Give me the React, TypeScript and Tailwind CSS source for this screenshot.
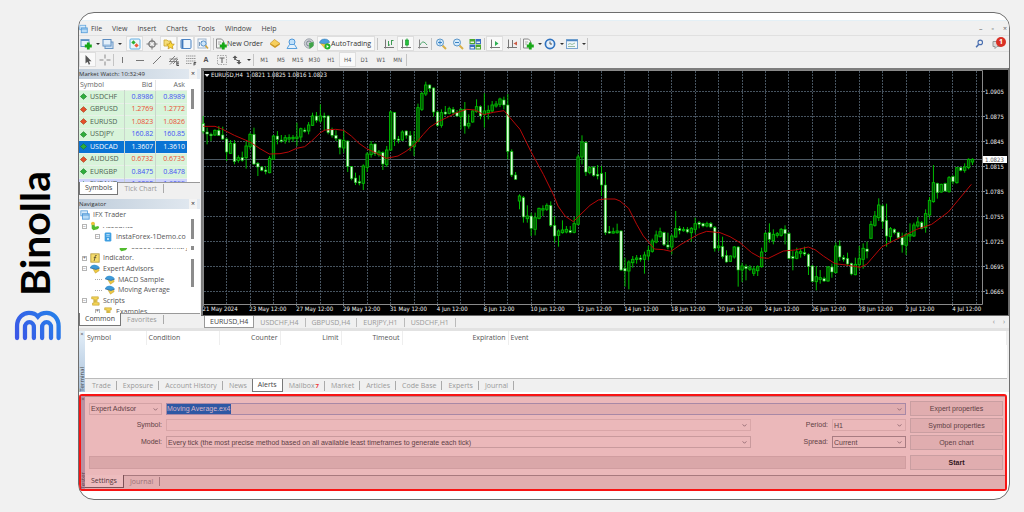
import type { ReactNode } from "react";

// one entry per H4 bar: [open, high, low, close], measured downwards from the top of the plot
const bars = [
    [172, 150, 203, 197], [198, 185, 235, 204], [205, 200, 225, 209], [207, 190, 210, 193],
    [193, 180, 210, 208], [207, 182, 222, 219], [219, 215, 285, 258], [262, 222, 264, 232],
    [232, 222, 295, 287], [283, 268, 290, 275], [275, 257, 287, 283], [275, 226, 308, 240],
    [242, 200, 250, 205], [205, 185, 297, 294], [292, 288, 330, 303], [303, 300, 316, 313],
    [312, 300, 325, 317], [320, 270, 322, 277], [280, 207, 282, 210], [210, 195, 235, 220],
    [222, 207, 230, 226], [224, 207, 233, 215], [218, 205, 230, 215], [218, 207, 228, 214],
    [217, 170, 240, 213], [213, 185, 228, 188], [192, 185, 200, 196], [195, 168, 205, 177],
    [178, 140, 180, 150], [150, 138, 170, 163], [165, 115, 170, 150], [150, 140, 192, 154],
    [150, 148, 205, 200], [190, 185, 215, 208], [208, 193, 225, 217], [220, 218, 265, 245],
    [246, 192, 260, 223], [225, 223, 318, 301], [302, 300, 343, 338], [336, 320, 357, 350],
    [347, 328, 358, 351], [352, 295, 372, 300], [304, 258, 318, 264], [266, 225, 275, 235],
    [234, 232, 270, 263], [266, 252, 272, 258], [260, 256, 312, 294], [296, 240, 303, 252],
    [252, 134, 255, 138], [140, 138, 240, 220], [219, 210, 232, 223], [222, 193, 225, 198],
    [195, 193, 218, 208], [208, 195, 255, 240], [242, 195, 270, 227], [226, 113, 228, 125],
    [130, 78, 135, 82], [84, 47, 90, 57], [57, 55, 78, 67], [66, 64, 152, 138],
    [138, 135, 182, 178], [178, 130, 185, 140], [138, 120, 148, 144], [142, 122, 145, 128],
    [130, 123, 148, 140], [140, 132, 152, 150], [152, 127, 190, 130], [130, 108, 203, 180],
    [180, 145, 188, 172], [168, 133, 170, 135], [137, 100, 140, 122], [122, 118, 160, 150],
    [145, 82, 185, 135], [140, 118, 160, 133], [135, 105, 140, 117], [120, 105, 125, 114],
    [115, 95, 123, 99], [102, 92, 130, 117], [117, 84, 280, 256], [257, 250, 333, 327],
    [327, 318, 342, 340], [405, 385, 430, 390], [395, 390, 470, 453], [458, 418, 470, 450],
    [450, 440, 510, 487], [490, 440, 508, 455], [457, 425, 460, 427], [432, 418, 450, 428],
    [430, 412, 435, 418], [418, 406, 483, 478], [478, 450, 530, 510], [508, 490, 542, 495],
    [500, 463, 503, 492], [498, 480, 502, 490], [494, 480, 502, 499], [499, 453, 502, 473],
    [475, 265, 478, 273], [273, 208, 295, 228], [230, 226, 330, 318], [320, 300, 325, 305],
    [304, 300, 332, 328], [325, 297, 340, 330], [323, 300, 390, 357], [357, 318, 507, 500],
    [497, 480, 503, 501], [501, 485, 503, 497], [500, 473, 503, 495], [495, 493, 615, 612],
    [607, 575, 662, 615], [615, 583, 670, 588], [590, 570, 605, 580], [580, 567, 593, 576],
    [576, 567, 587, 580], [580, 557, 623, 567], [570, 540, 583, 553], [556, 518, 560, 525],
    [528, 494, 532, 507], [512, 485, 515, 497], [500, 497, 540, 536], [537, 500, 550, 543],
    [543, 505, 565, 510], [513, 435, 515, 488], [488, 480, 505, 493], [494, 483, 497, 490],
    [490, 483, 502, 498], [500, 483, 527, 487], [490, 455, 502, 473], [470, 465, 487, 475],
    [473, 470, 484, 480], [480, 467, 484, 473], [473, 468, 487, 483], [485, 480, 557, 547],
    [545, 505, 555, 540], [542, 512, 578, 572], [568, 553, 590, 588], [586, 568, 588, 570],
    [573, 540, 578, 543], [543, 540, 662, 612], [612, 590, 648, 600], [602, 595, 643, 608],
    [610, 597, 615, 605], [622, 600, 630, 609], [614, 598, 630, 602], [602, 545, 605, 558],
    [556, 498, 558, 502], [500, 472, 530, 520], [524, 490, 535, 505], [508, 498, 515, 503],
    [508, 486, 512, 490], [490, 478, 535, 503], [503, 498, 580, 577], [572, 555, 613, 577],
    [577, 545, 580, 558], [562, 548, 575, 557], [560, 542, 570, 564], [565, 562, 627, 602],
    [600, 597, 648, 646], [647, 600, 673, 632], [640, 612, 653, 635], [638, 632, 648, 645],
    [645, 600, 647, 603], [603, 593, 635, 618], [620, 530, 622, 540], [540, 523, 585, 573],
    [575, 567, 587, 580], [577, 560, 600, 594], [592, 590, 628, 624], [626, 575, 628, 595],
    [596, 540, 610, 578], [580, 532, 608, 547], [549, 527, 577, 556], [517, 465, 518, 475],
    [478, 435, 482, 450], [455, 397, 465, 417], [420, 415, 488, 467], [463, 413, 542, 510],
    [512, 483, 530, 488], [490, 487, 505, 500], [500, 497, 518, 515], [515, 500, 560, 537],
    [538, 500, 567, 505], [510, 472, 525, 505], [510, 470, 513, 477], [480, 453, 485, 468],
    [470, 465, 490, 487], [485, 430, 500, 443], [447, 393, 457, 403], [407, 297, 410, 350],
    [352, 350, 398, 380], [378, 353, 380, 355], [353, 350, 378, 375], [377, 330, 380, 335],
    [332, 328, 355, 347], [350, 303, 353, 305], [305, 303, 316, 313], [313, 292, 320, 303],
    [305, 277, 310, 280], [288, 277, 297, 280],
];

const average = [
    [10, 181], [45, 181], [68, 190], [103, 208], [150, 228], [180, 248], [208, 264], [240, 263],
    [265, 258], [290, 247], [314, 242], [335, 225], [361, 200], [375, 192], [407, 190], [431, 193],
    [454, 210], [477, 232], [500, 248], [530, 262], [559, 277], [594, 270], [618, 256], [645, 235],
    [670, 205], [690, 183], [715, 167], [740, 155], [770, 140], [800, 130], [825, 132], [851, 146],
    [880, 139], [912, 134], [930, 155], [960, 190], [992, 255], [1030, 325], [1062, 390], [1074, 420],
    [1095, 450], [1120, 467], [1140, 447], [1170, 418], [1195, 402], [1214, 399], [1245, 399],
    [1260, 405], [1286, 427], [1310, 475], [1330, 510], [1363, 549], [1390, 551], [1413, 556],
    [1440, 537], [1472, 518], [1495, 505], [1520, 496], [1560, 500], [1590, 512], [1620, 530],
    [1655, 560], [1682, 575], [1705, 577], [1750, 555], [1785, 552], [1825, 543], [1845, 551],
    [1870, 570], [1905, 593], [1945, 598], [1980, 604], [2000, 595], [2045, 543], [2085, 522],
    [2115, 508], [2150, 490], [2195, 475], [2245, 438], [2314, 355],
];

const prices = ["1.0905", "1.0875", "1.0845", "1.0815", "1.0785", "1.0755", "1.0725", "1.0695", "1.0665"];

const dates = [
    "21 May 2024", "23 May 12:00", "27 May 12:00", "29 May 12:00", "31 May 12:00", "4 Jun 12:00",
    "6 Jun 12:00", "10 Jun 12:00", "12 Jun 12:00", "14 Jun 12:00", "18 Jun 12:00", "20 Jun 12:00",
    "24 Jun 12:00", "26 Jun 12:00", "28 Jun 12:00", "2 Jul 12:00", "4 Jul 12:00",
];

const barX = (i: number) => 2.2 + i * 3.905;
const plotY = (v: number) => v / 3 - 2;

function Chart() {
    return (
        <svg viewBox="0 0 808 248" className="block w-full h-auto bg-black" fontFamily="'DejaVu Sans Condensed', 'DejaVu Sans', sans-serif" fontSize="6" fill="#f0f0f0">
            <path d="M0 1H808M1 0V248" stroke="#7d7d7d" strokeWidth="2" />
            <path d="M0 247.500H808M807.500 0V248" stroke="#6a6a6a" />
            <g stroke="#46535f" strokeDasharray="2 1">
                {prices.map((p, i) => (
                    <path key={p} d={`M3 ${23.5 + i * 25}H781`} />
                ))}
                {Array.from({ length: 33 }, (_, i) => (
                    <path key={i} d={`M${Math.floor(barX(6 + i * 6)) + 0.5} 3V236`} />
                ))}
            </g>
            <path d="M3 91.500H781" stroke="#4d5a64" />
            <path d="M2.500 236V2.500H781.500V236.500H2.500" stroke="#8a8a8a" fill="none" />
            {bars.map(([open, high, low, close], i) => {
                const falling = close > open;
                const top = plotY(Math.min(open, close));
                const height = Math.max(Math.abs(close - open) / 3, 1.4);
                return (
                    <g key={i} stroke="#00bd00">
                        <path d={`M${barX(i)} ${plotY(high)}V${plotY(low)}`} />
                        <rect x={barX(i) - 1.2} y={top} width="2.400" height={height} fill={falling ? "#dcffdc" : "#005000"} strokeWidth={falling ? 0.6 : 0.9} />
                    </g>
                );
            })}
            <polyline points={average.map(([x, y]) => `${x / 3 - 1},${plotY(y)}`).join(" ")} fill="none" stroke="#b80808" />
            <path d="M3.500 6h5l-2.500 3z" />
            <text x="10" y="9">EURUSD,H4&#160; 1.0821 1.0825 1.0816 1.0823</text>
            {prices.map((p, i) => (
                <g key={p}>
                    <path d={`M782 ${23.5 + i * 25}h2`} stroke="#8a8a8a" />
                    <text x="784" y={26 + i * 25}>{p}</text>
                </g>
            ))}
            <rect x="782" y="88" width="24" height="7" fill="#fff" />
            <text x="784" y="94" fill="#555">1.0823</text>
            {dates.map((d, i) => (
                <g key={d}>
                    <path d={`M${Math.floor(barX(i * 12)) + 0.5} 236v2`} stroke="#8a8a8a" />
                    <text x={1.5 + i * 46.86} y="243">{d}</text>
                </g>
            ))}
        </svg>
    );
}

function Icon({ children }: { children: ReactNode }) {
    return (
        <svg viewBox="0 0 12 12" className="w-3 h-3 shrink-0" fill="none" aria-hidden="true">
            {children}
        </svg>
    );
}

const plus = <path d="M8.300 4.500v7M4.800 8h7" stroke="#17a817" strokeWidth="2.800" />;

const icons: Record<string, ReactNode> = {
    newChart: (
        <Icon>
            <rect x="1" y="1.500" width="8" height="7" fill="#e8f2fb" stroke="#6b9bc7" />
            <path d="M1 2.500h8" stroke="#5b8fc4" />
            {plus}
        </Icon>
    ),
    profiles: (
        <Icon>
            <rect x="3" y="4" width="8" height="6.500" fill="#cfe2f5" stroke="#6a96c4" />
            <rect x="1" y="1.500" width="8" height="6.500" fill="#e3effa" stroke="#5b8bbf" />
            <path d="M1.500 7h7" stroke="#8fb6dc" />
        </Icon>
    ),
    watch: (
        <Icon>
            <rect x="1" y="1" width="10" height="10" rx="1" fill="#eaf5fc" stroke="#62aee0" />
            <path d="M4.500 2.200l2.200 2.200-2.200 2.200-2.200-2.200z" fill="#2eb02e" />
            <path d="M7.500 5.200l2.200 2.200-2.200 2.200-2.200-2.200z" fill="#ee5a35" />
        </Icon>
    ),
    crosshair: (
        <Icon>
            <circle cx="6" cy="6" r="3.200" stroke="#777" strokeWidth="1.200" />
            <path d="M6 .5v4M6 7.500v4M.5 6h4M7.500 6h4" stroke="#777" />
        </Icon>
    ),
    navigator: (
        <Icon>
            <path d="M1 8V2h3l1 1h3v5z" fill="#f6dd77" stroke="#c9a42f" strokeWidth=".8" />
            <path d="M7.500 3.500l1.200 2.400 2.600.4-1.900 1.900.5 2.600-2.400-1.200-2.400 1.200.5-2.600L3.700 6.300l2.600-.4z" fill="#fbd83a" stroke="#b98c1a" strokeWidth=".7" />
        </Icon>
    ),
    terminal: (
        <Icon>
            <rect x="1" y="1.500" width="10" height="9" rx="1" fill="#eef5fc" stroke="#4b83c3" />
            <path d="M2.500 2v8" stroke="#3f78bb" strokeWidth="1.800" />
        </Icon>
    ),
    tester: (
        <Icon>
            <rect x="1" y="1" width="8" height="9" fill="#f3f6fa" stroke="#9db4cc" />
            <path d="M2.500 8V4M4.500 6V3" stroke="#7e9dbd" />
            <circle cx="6.500" cy="5.500" r="2.600" fill="#cfe6fa" stroke="#5590c9" />
            <path d="M8.500 7.500L11 10.500" stroke="#d1a33a" strokeWidth="1.600" />
        </Icon>
    ),
    order: (
        <Icon>
            <path d="M1.500 1h5l2 2v7h-7z" fill="#f4f4f4" stroke="#888" />
            <path d="M3 4h3M3 6h2" stroke="#999" strokeWidth=".8" />
            {plus}
        </Icon>
    ),
    gold: (
        <Icon>
            <path d="M1 6.500L6 3l5 3.500L6 10z" fill="#d19a20" />
            <path d="M1 5.500L5.500 1.500l5.500 4L6 8.500z" fill="#f7cf5c" stroke="#bd8a1e" strokeWidth=".6" />
        </Icon>
    ),
    market: (
        <Icon>
            <circle cx="6" cy="4" r="3" fill="#bfe0fa" stroke="#4f97d8" />
            <path d="M3.500 6.500h5L11 10.500H1z" fill="#e4f1fc" stroke="#5aa0dc" />
        </Icon>
    ),
    signals: (
        <Icon>
            <circle cx="6" cy="5.500" r="4.700" fill="#c9cdd2" stroke="#a3a9b0" />
            <circle cx="6" cy="5.500" r="2.500" stroke="#7f8994" />
            <path d="M6 5l4.500-1v4L6.500 11z" fill="#3fa548" />
        </Icon>
    ),
    auto: (
        <Icon>
            <path d="M1.500 5.500l4.500 5 3-3V4z" fill="#f1ca45" stroke="#c79b21" strokeWidth=".5" />
            <path d="M.5 5c0-2 2-4 5-4s5 1.500 5 3.500L6 6z" fill="#4c9fdd" stroke="#3479b5" strokeWidth=".5" />
            <circle cx="8.500" cy="8.500" r="3" fill="#1fb32b" />
            <path d="M7.600 7l2.300 1.500L7.600 10z" fill="#fff" />
        </Icon>
    ),
    barChart: (
        <Icon>
            <path d="M2.500 1.500v9M1 9.500h10" stroke="#777" />
            <path d="M5.500 3v5M8.500 2v5M8.500 2.500h2M5.500 7h1.500" stroke="#3f9b55" />
        </Icon>
    ),
    candleChart: (
        <Icon>
            <path d="M2.500 1.500v9M1 9.500h10" stroke="#777" />
            <path d="M7 .5v8" stroke="#17a22d" />
            <rect x="5.500" y="2" width="3" height="5" fill="#24c23c" stroke="#159129" strokeWidth=".6" />
        </Icon>
    ),
    lineChart: (
        <Icon>
            <path d="M2.500 1.500v9M1 9.500h10" stroke="#888" />
            <path d="M3 7c2-4 4-4 7 0" stroke="#4ba36a" />
        </Icon>
    ),
    zoomIn: (
        <Icon>
            <path d="M7.500 7.500l3.500 3.500" stroke="#d9b04a" strokeWidth="2" />
            <circle cx="5" cy="4.500" r="3.500" fill="#d5ebfb" stroke="#5a95c8" />
            <path d="M5 2.500v4M3 4.500h4" stroke="#3b82c4" />
        </Icon>
    ),
    zoomOut: (
        <Icon>
            <path d="M7.500 7.500l3.500 3.500" stroke="#d9b04a" strokeWidth="2" />
            <circle cx="5" cy="4.500" r="3.500" fill="#d5ebfb" stroke="#5a95c8" />
            <path d="M3 4.500h4" stroke="#3b82c4" />
        </Icon>
    ),
    tile: (
        <Icon>
            <path d="M.5 1H6v5H.5zM6.500 6.500H12v5H6.500z" fill="#4ba82e" />
            <path d="M6.500 1H12v5H6.500zM.5 6.500H6v5H.5z" fill="#3a6fc4" />
            <path d="M1.500 3.500H5v1.500H1.500zM7.500 3.500H11v1.500H7.500zM1.500 9H5v1.500H1.500zM7.500 9H11v1.500H7.500z" fill="#e9f2ea" />
        </Icon>
    ),
    scroll: (
        <Icon>
            <path d="M2.500 1.500v9M1 9.500h10" stroke="#777" />
            <path d="M6 3l3.500 2.500L6 8z" fill="#2cb052" />
        </Icon>
    ),
    shift: (
        <Icon>
            <path d="M2.500 1.500v9M1 9.500h10M6.500 2v7" stroke="#777" />
            <path d="M11 3.500L7.500 5.500 11 7.500z" fill="#cc5b45" />
        </Icon>
    ),
    clock: (
        <Icon>
            <circle cx="6" cy="6" r="4.600" fill="#e6f1fb" stroke="#2f72bf" strokeWidth="1.700" />
            <path d="M6 3.500V6h2" stroke="#555" />
        </Icon>
    ),
    template: (
        <Icon>
            <rect x=".5" y="1.500" width="11" height="9" fill="#f0f6fb" stroke="#7aa5cf" />
            <path d="M.5 2.500h11" stroke="#4c86c2" strokeWidth="1.500" />
            <path d="M2 6.500l2-1 2 1 3-1.500M2 8.500h7" stroke="#7fae8c" strokeWidth=".8" />
        </Icon>
    ),
    cursor: (
        <Icon>
            <path d="M3.500 1v8.500l2-1.800 1.300 3 1.400-.7-1.300-2.800h2.600z" fill="#555" />
        </Icon>
    ),
    cross: (
        <Icon>
            <path d="M6 .5v4M6 7.500v4M.5 6h4M7.500 6h4" stroke="#888" />
        </Icon>
    ),
    vline: <Icon><path d="M5.500 3v6" stroke="#777" /></Icon>,
    hline: <Icon><path d="M2 6.500h8" stroke="#777" /></Icon>,
    trend: <Icon><path d="M2 10l8-8" stroke="#777" /></Icon>,
    channel: (
        <Icon>
            <path d="M1 8l6-6M2 10.500l7-7M5 10l5-5M1.500 5h8M1 7.500h8" stroke="#777" strokeWidth=".9" />
            <path d="M11 8H8.800v3.500H11M8.800 9.800H11" stroke="#333" strokeWidth=".8" />
        </Icon>
    ),
    fibo: (
        <Icon>
            <path d="M1 2h10M1 4.500h10M1 7h10M1 9.500h6" stroke="#999" strokeDasharray="1.500 .5" />
            <path d="M9 11.500V8.500h2.200M9 10h2" stroke="#333" strokeWidth=".8" />
        </Icon>
    ),
    label: (
        <Icon>
            <rect x="1.500" y="1.500" width="9" height="9" stroke="#aaa" strokeDasharray="1.500 1" />
            <path d="M3.500 4h5M6 4v5" stroke="#666" strokeWidth="1.100" />
        </Icon>
    ),
    arrows: (
        <Icon>
            <path d="M4 1.500l2.500 2.500H1.500zM8 10.500L5.500 8h5zM3.200 4h1.600v2H3.200zM7.200 6h1.600v2H7.200z" fill="#555" />
            <path d="M4.500 5.500l3 1.500" stroke="#555" />
        </Icon>
    ),
    windows: (
        <Icon>
            <rect x="1" y="1" width="8" height="6" fill="#d6eafa" stroke="#5ba1db" />
            <rect x="3" y="4.500" width="8" height="6.500" fill="#b7dbf7" stroke="#4b95d6" />
            <path d="M3 6h8" stroke="#4b95d6" />
        </Icon>
    ),
    person: (
        <Icon>
            <path d="M2 3v6l2 2 5-1 2-2-1-2-4 1-1-5z" fill="#52bb2f" />
            <circle cx="3.500" cy="3" r="2.200" fill="#eec13d" />
        </Icon>
    ),
    server: (
        <Icon>
            <rect x="2" y=".5" width="8" height="11" rx="1.500" fill="#3f9fe2" />
            <path d="M4 3h4M4 5h4" stroke="#c6e6fb" />
            <circle cx="6" cy="8.500" r="1.200" fill="#e6f5ff" />
        </Icon>
    ),
    indicator: (
        <Icon>
            <rect x="1" y="1" width="10" height="10" fill="#f5dc6c" stroke="#b3983a" />
            <path d="M8 3H6.500L5 9.500M4.500 5.500h3" stroke="#5d5130" />
        </Icon>
    ),
    advisor: (
        <Icon>
            <path d="M3 5l3.500 6 4.500-3-1-4z" fill="#ecc843" stroke="#b8932b" strokeWidth=".5" />
            <path d="M0 4.500C1 1.500 3.500.5 6 1c3 .5 5.500 2 5.500 4L7 6.500z" fill="#3f9ad8" />
            <path d="M0 4.500l7 2 4.500-1.500" stroke="#2d6fa6" />
        </Icon>
    ),
    script: (
        <Icon>
            <path d="M2 1h8v2.500H8.500V8H11v3H3V8.500h1.500V3.500H2z" fill="#f3d457" stroke="#c09c2c" strokeWidth=".7" />
            <path d="M5 5h2.500M5 7h2.500" stroke="#a3872d" strokeWidth=".7" />
        </Icon>
    ),
};

function Caret() {
    return <span className="w-0 h-0 border-x-2 border-x-transparent border-t-2 border-t-[#333]" />;
}

function Tool({ name, pressed, menu }: { name: string; pressed?: boolean; menu?: boolean }) {
    return (
        <button
            type="button"
            aria-label={name}
            className={`flex items-center justify-center h-full ${menu ? "w-[22px] gap-1" : "w-[17px]"} ${pressed ? "bg-[#f9f9f9] border border-[#dedede]" : ""}`}
        >
            {icons[name]}
            {menu && <Caret />}
        </button>
    );
}

function Sep() {
    return <span className="w-px h-3 bg-[#c4c4c4]" />;
}

function MenuBar() {
    return (
        <nav className="flex items-center h-[15px] pr-[2px] pt-px border-t border-[#e4f0f6]">
            <span className="w-[12px] [&>svg]:w-[9px]">{icons.windows}</span>
            <div className="flex gap-[10px] text-[#444]">
                {["File", "View", "Insert", "Charts", "Tools", "Window", "Help"].map((m) => (
                    <button key={m} type="button">{m}</button>
                ))}
            </div>
            <div className="ml-auto flex gap-[9px] text-[#666]">
                <button type="button" aria-label="Minimize">–</button>
                <button type="button" aria-label="Restore">▫</button>
                <button type="button" aria-label="Close">×</button>
            </div>
        </nav>
    );
}

function Toolbars() {
    return (
        <>
            <div className="flex items-center h-4 border-t border-[#e0e0e0] text-[#333]">
                <Tool name="newChart" menu />
                <Tool name="profiles" menu />
                <span className="ml-[2px] mr-px"><Sep /></span>
                <Tool name="watch" pressed />
                <Tool name="crosshair" />
                <Tool name="navigator" pressed />
                <Tool name="terminal" pressed />
                <Tool name="tester" pressed />
                <span className="flex ml-[2px] mr-px"><Sep /></span>
                <button type="button" className="flex items-center w-[51px] whitespace-nowrap">
                    {icons.order}New Order
                </button>
                <Tool name="gold" />
                <Tool name="market" />
                <Tool name="signals" />
                <button type="button" className="flex items-center w-[58px] h-full pl-px bg-[#f9f9f9] border border-[#dedede]">
                    {icons.auto}AutoTrading
                </button>
                <span className="flex mx-[2px]"><Sep /></span>
                <Tool name="barChart" />
                <Tool name="candleChart" pressed />
                <Tool name="lineChart" />
                <Sep />
                <Tool name="zoomIn" />
                <Tool name="zoomOut" />
                <Tool name="tile" />
                <span className="flex mx-px"><Sep /></span>
                <Tool name="scroll" pressed />
                <Tool name="shift" />
                <Sep />
                <Tool name="order" menu />
                <Tool name="clock" menu />
                <Tool name="template" menu />
                <Sep />
                <button type="button" aria-label="Search" className="ml-auto mr-2">
                    <svg viewBox="0 0 12 12" className="w-[9px] h-[9px]" fill="none" stroke="#4a6fb0">
                        <circle cx="7" cy="4.500" r="3" strokeWidth="1.500" />
                        <path d="M5 7l-3.500 4" strokeWidth="2" />
                    </svg>
                </button>
                <button type="button" aria-label="Notifications" className="relative w-[14px] h-3 mr-[3px]">
                    <svg viewBox="0 0 12 12" className="w-3 h-3" fill="#d9d9d9" stroke="#9a9a9a">
                        <path d="M1 3.500h8v5H5l-2 2v-2H1z" />
                    </svg>
                    <span className="absolute right-0 -top-px w-[10px] h-[10px] rounded-full bg-[#d93025] text-white text-[7px] leading-[10px] font-bold text-center">1</span>
                </button>
            </div>
            <div className="flex items-center h-4 border-t border-[#e0e0e0] text-[#555]">
                <Tool name="cursor" pressed />
                <Tool name="cross" />
                <Sep />
                <Tool name="vline" />
                <Tool name="hline" />
                <Tool name="trend" />
                <Tool name="channel" />
                <Tool name="fibo" />
                <button type="button" className="w-[14px] font-bold">A</button>
                <Tool name="label" />
                <Tool name="arrows" menu />
                <span className="flex ml-px mr-[2px]"><Sep /></span>
                <div className="grid grid-cols-9 w-[150px] h-full text-[6px] font-['DejaVu_Sans_Condensed','DejaVu_Sans',sans-serif]">
                    {["M1", "M5", "M15", "M30", "H1", "H4", "D1", "W1", "MN"].map((t) => (
                        <button key={t} type="button" className={t === "H4" ? "bg-[#f9f9f9] border border-[#dedede]" : ""}>{t}</button>
                    ))}
                </div>
                <Sep />
            </div>
        </>
    );
}

const quotes = [
    ["USDCHF", "0.8986", "0.8989", "up"],
    ["GBPUSD", "1.2769", "1.2772", "down"],
    ["EURUSD", "1.0823", "1.0826", "down"],
    ["USDJPY", "160.82", "160.85", "up"],
    ["USDCAD", "1.3607", "1.3610", "selected"],
    ["AUDUSD", "0.6732", "0.6735", "down"],
    ["EURGBP", "0.8475", "0.8478", "up"],
    ["EURAUD", "1.6092", "1.6099", "last"],
];

const rowStyle: Record<string, string> = {
    up: "bg-[#d8f4da] text-[#3f50f5]",
    down: "bg-[#d8f4da] text-[#ea4f35]",
    selected: "bg-[#0a74d4] text-white",
    last: "bg-[#cdd3fb] text-[#3f50f5]",
};

function PanelTitle({ children }: { children: ReactNode }) {
    return (
        <div className="flex justify-between items-center pr-[3px] h-[10px] bg-linear-to-r from-[#bfcddb] to-[#e3eaf1] text-[6px] text-[#333]">
            <span>{children}</span>
            <button type="button" aria-label="Close panel" className="w-[8px] bg-[#f4f4f4] text-[7px]">×</button>
        </div>
    );
}

function PanelTabs({ tabs }: { tabs: string[] }) {
    return (
        <div className="flex items-start h-[13px] border-t border-[#999] text-[#999]">
            <button type="button" className="h-[13px] px-[5px] -mt-px bg-white border-x border-b border-[#777] text-[#444]">{tabs[0]}</button>
            <button type="button" className="px-[6px] mt-px leading-[9px] border-r border-[#aaa]">{tabs[1]}</button>
        </div>
    );
}

function MarketWatch() {
    return (
        <section>
            <PanelTitle>Market Watch: 10:32:49</PanelTitle>
            <div className="flex h-[103px] pt-px overflow-hidden bg-white">
                <table className="w-[108px] h-[110px] shrink-0">
                    <thead>
                        <tr className="text-[#666]">
                            <th className="w-[45px] pl-px text-left font-normal">Symbol</th>
                            <th className="pr-[3px] text-right font-normal border-r border-[#e5e5e5]">Bid</th>
                            <th className="pr-[2px] text-right font-normal">Ask</th>
                        </tr>
                    </thead>
                    <tbody>
                        {quotes.map(([symbol, bid, ask, state]) => (
                            <tr key={symbol} className={`border-t border-[#e9f0e9] ${rowStyle[state]}`}>
                                <td className={state === "selected" ? "" : "text-[#4c5f50]"}>
                                    <span className="flex items-center gap-[3px] pl-px">
                                        <svg viewBox="0 0 8 8" className="w-[7px] h-[7px]">
                                            <path d="M4 .8L7.500 4 4 7.200.5 4z" fill={state === "down" ? "#e5512c" : "#2fae3c"} stroke={state === "down" ? "#a93618" : "#1c7d2a"} strokeWidth=".8" />
                                        </svg>
                                        {symbol}
                                    </span>
                                </td>
                                <td className="pr-[2px] text-right border-x border-[#c9d6cc]">{bid}</td>
                                <td className="pr-[2px] text-right">{ask}</td>
                            </tr>
                        ))}
                    </tbody>
                </table>
                <span className="w-[3px] h-5 mt-[9px] ml-1 bg-[#8c8c8c]" />
            </div>
            <PanelTabs tabs={["Symbols", "Tick Chart"]} />
        </section>
    );
}

const tree = [
    { label: "IFX Trader", icon: "windows", pad: "pl-px" },
    { label: "Accounts", icon: "person", pad: "pl-[3px]", box: "−", hide: true },
    { label: "InstaForex-1Demo.co", icon: "server", pad: "pl-[16px]", box: "−" },
    { label: "65500 fast Dmitry", icon: "person", pad: "pl-[39px]", hide: true },
    { label: "Indicator.", icon: "indicator", pad: "pl-[3px]", box: "+" },
    { label: "Expert Advisors", icon: "advisor", pad: "pl-[3px]", box: "−" },
    { label: "MACD Sample", icon: "advisor", pad: "pl-[16px]", leaf: true },
    { label: "Moving Average", icon: "advisor", pad: "pl-[16px]", leaf: true },
    { label: "Scripts", icon: "script", pad: "pl-[3px]", box: "−" },
    { label: "Examples", icon: "script", pad: "pl-[16px]", box: "+" },
];

function Navigator() {
    return (
        <section className="mt-[4px]">
            <PanelTitle>Navigator</PanelTitle>
            <div className="flex h-[104px] pt-px overflow-hidden bg-white">
                <ul className="flex flex-col w-[108px] h-[107px] overflow-hidden whitespace-nowrap text-[#555]">
                    {tree.map((n) => (
                        <li key={n.label} className={`relative flex flex-1 min-h-0 items-center gap-[3px] ${n.pad} [&>svg]:w-[10px] [&>svg]:h-[10px]`}>
                            {n.box && <span className="w-[5px] h-[5px] border border-[#b5b5b5] text-[5px] leading-[3px] text-center">{n.box}</span>}
                            {n.leaf && <span className="w-[7px] border-t border-dotted border-[#aaa]" />}
                            {icons[n.icon]}
                            {n.label}
                            {n.hide && <span className="absolute right-0 top-0 w-[84px] h-[6px] bg-white" />}
                        </li>
                    ))}
                </ul>
                <div className="flex flex-col ml-1 mt-[9px] w-[3px]">
                    <span className="h-5 bg-[#8c8c8c]" />
                    <span className="h-1 mt-[7px] bg-[#8c8c8c]" />
                    <span className="h-7 mt-[9px] bg-[#8c8c8c]" />
                </div>
            </div>
            <PanelTabs tabs={["Common", "Favorites"]} />
        </section>
    );
}

function ChartTabs() {
    return (
        <div className="flex items-center h-3 pl-[3px] text-[#999]">
            <button type="button" className="h-full px-[5px] leading-[10px] bg-white border-x border-b border-[#999] text-[#444]">EURUSD,H4</button>
            {["USDCHF,H4", "GBPUSD,H4", "EURJPY,H1", "USDCHF,H1"].map((t) => (
                <button key={t} type="button" className="px-[6px] leading-[9px] border-r border-[#bbb]">{t}</button>
            ))}
            <span className="ml-auto mr-1 flex gap-2 text-[#888]">
                <button type="button" aria-label="Scroll left">‹</button>
                <button type="button" aria-label="Scroll right">›</button>
            </span>
        </div>
    );
}

function Terminal() {
    const tabs = ["Trade", "Exposure", "Account History", "News", "Alerts", "Mailbox", "Market", "Articles", "Code Base", "Experts", "Journal"];
    return (
        <section className="flex border-t-[3px] border-[#e2e2e2]">
            <div className="flex flex-col justify-between items-center w-[6px] h-[61px] bg-linear-to-b from-[#e3eef8] to-[#a9c1da] text-[6px] leading-[7px] text-[#444] overflow-hidden">
                <button type="button" aria-label="Close terminal">×</button>
                <span className="[writing-mode:vertical-rl] rotate-180">Terminal</span>
            </div>
            <div className="flex-1 pr-[2px]">
                <div className="h-[48px] bg-white border-b border-[#bbb]">
                    <table className="w-full table-fixed text-[#555]">
                        <thead>
                            <tr className="h-[14px] *:font-normal *:px-[2px] *:border-r *:border-[#eee]">
                                <th className="w-[61px] text-left">Symbol</th>
                                <th className="w-[73px] text-left">Condition</th>
                                <th className="w-[61px] text-right">Counter</th>
                                <th className="w-[61px] text-right">Limit</th>
                                <th className="w-[61px] text-right">Timeout</th>
                                <th className="w-[106px] text-right">Expiration</th>
                                <th className="text-left">Event</th>
                            </tr>
                        </thead>
                    </table>
                </div>
                <div className="flex items-center h-[13px] pl-px text-[#999]">
                    {tabs.map((t) =>
                        t === "Alerts" ? (
                            <button key={t} type="button" className="h-full px-[5px] -mt-px leading-[11px] bg-white border-x border-b border-[#777] text-[#444]">{t}</button>
                        ) : (
                            <button key={t} type="button" className={`pl-[6px] pr-[5px] leading-[9px] ${t === "News" ? "" : "border-r border-[#aaa]"}`}>
                                {t}
                                {t === "Mailbox" && <span className="pl-px text-[6px] font-bold text-[#e33]">7</span>}
                            </button>
                        ),
                    )}
                </div>
            </div>
        </section>
    );
}

function Chevron() {
    return (
        <svg viewBox="0 0 6 4" className="absolute right-[3px] top-1 w-[5px] h-[3px] pointer-events-none" fill="none" stroke="#7d5560">
            <path d="M.5.5L3 3 5.500.5" />
        </svg>
    );
}

function Select({ id, label, value, className }: { id: string; label: string; value: string; className: string }) {
    return (
        <div className={`relative h-3 border ${className}`}>
            <select id={id} aria-label={label} className="block w-full h-full pl-px leading-[9px] appearance-none outline-none">
                <option>{value}</option>
            </select>
            <Chevron />
        </div>
    );
}

function Tester() {
    const button = "h-[15px] border border-[#c99ea1] bg-[#e0adaf]";
    return (
        <section className="flex mt-[2px] mr-[2px] rounded-[3px] border-2 border-[#f81414] bg-[#ebb8ba] text-[#5e3f45]">
            <div className="flex flex-col justify-between items-center w-1 bg-[#b88fa0] text-[6px] leading-[6px] overflow-hidden">
                <button type="button" aria-label="Close tester">×</button>
                <span className="[writing-mode:vertical-rl] rotate-180">Tester</span>
            </div>
            <div className="flex-1 border-t border-[#b98a8e]">
                <form className="flex gap-[4px] h-[78px] pt-[4px] pl-1 pr-[2px] font-['Liberation_Sans',Arial,sans-serif]">
                    <div className="flex-1 flex flex-col">
                        <div className="flex items-center gap-[4px] h-[15px]">
                            <Select id="kind" label="Type" value="Expert Advisor" className="w-[73px] border-[#d3a2a5]" />
                            <div className="relative flex-1 h-3 border border-[#a888a6] bg-[#e0adb0]">
                                <select aria-label="Expert" className="block h-[10px] leading-[10px] bg-[#2e58a4] text-[#d9b6c6] appearance-none">
                                    <option>Moving Average.ex4</option>
                                </select>
                                <Chevron />
                            </div>
                        </div>
                        <div className="flex items-center gap-[4px] h-4 mt-px">
                            <label htmlFor="symbol" className="w-[73px] text-right">Symbol:</label>
                            <Select id="symbol" label="Symbol" value="" className="flex-1 border-[#d9a6a8]" />
                            <label htmlFor="period" className="w-[73px] text-right">Period:</label>
                            <Select id="period" label="Period" value="H1" className="w-[74px] border-[#d9a6a8]" />
                        </div>
                        <div className="flex items-center gap-[4px] h-4 mt-px">
                            <label htmlFor="model" className="w-[73px] text-right">Model:</label>
                            <Select id="model" label="Model" value="Every tick (the most precise method based on all available least timeframes to generate each tick)" className="flex-1 border-[#c99a9d]" />
                            <label htmlFor="spread" className="w-[73px] text-right">Spread:</label>
                            <Select id="spread" label="Spread" value="Current" className="w-[74px] border-[#a87c82]" />
                        </div>
                        <div className="h-[13px] mt-[6px] bg-[#daa7a9] border border-[#d09da0]" />
                    </div>
                    <div className="flex flex-col gap-[2px] w-[93px]">
                        <button type="button" className={button}>Expert properties</button>
                        <button type="button" className={button}>Symbol properties</button>
                        <button type="button" className={button}>Open chart</button>
                        <button type="button" className={`${button} mt-[3px] font-bold text-[#33181c]`}>Start</button>
                    </div>
                </form>
                <div className="flex items-start h-[14px] border-t border-[#a8797e] bg-[#e1aeb0] text-[#9c7276]">
                    <button type="button" className="h-[13px] px-[6px] -mt-px bg-[#edbcbe] border-r border-b border-[#7d5257] text-[#54353b]">Settings</button>
                    <button type="button" className="px-[6px] mt-px leading-[9px] border-r border-[#a8797e]">Journal</button>
                </div>
            </div>
        </section>
    );
}

function Brand() {
    return (
        <aside className="flex flex-col items-center justify-center w-[78px] shrink-0 pr-[3px]">
            <span className="mr-[5px] [writing-mode:vertical-rl] rotate-180 font-['Lato',sans-serif] font-bold text-[41px] leading-[48px] text-black">Binolla</span>
            <svg viewBox="40 478 145 94" className="w-12 h-[31px] mt-[14px]" fill="none" stroke="url(#brand)" strokeWidth="13" strokeLinecap="round">
                <defs>
                    <linearGradient id="brand" gradientUnits="userSpaceOnUse" x1="45" y1="570" x2="180" y2="480">
                        <stop offset="0" stopColor="#3d55e6" />
                        <stop offset="1" stopColor="#2383ea" />
                    </linearGradient>
                </defs>
                <path d="M49 563V527C49 500 68 487 85 487c13 0 22 5 27 11 5-6 14-11 27-11 17 0 36 13 36 40v36" />
                <path d="M73 563V530a13.500 15 0 0 1 27 0v33M125 563V530a13.500 15 0 0 1 27 0v33" />
            </svg>
        </aside>
    );
}

export default function App() {
    return (
        <div className="flex min-h-screen py-3 pr-[14px] bg-[#f1f1f1] font-['Open_Sans','Noto_Sans',sans-serif] text-[7px] leading-[10px]">
            <Brand />
            <main className="flex-1 min-w-0 self-start pt-[7px] pb-2 rounded-[16px] border border-[#6e6e6e] bg-white overflow-hidden">
                <div className="bg-[#f0f0f0]">
                    <MenuBar />
                    <Toolbars />
                    <div className="flex pt-px">
                        <div className="w-[122px] shrink-0 pt-px pr-px">
                            <MarketWatch />
                            <Navigator />
                        </div>
                        <div className="flex-1 min-w-0">
                            <Chart />
                            <ChartTabs />
                        </div>
                    </div>
                    <Terminal />
                </div>
                <Tester />
            </main>
        </div>
    );
}
